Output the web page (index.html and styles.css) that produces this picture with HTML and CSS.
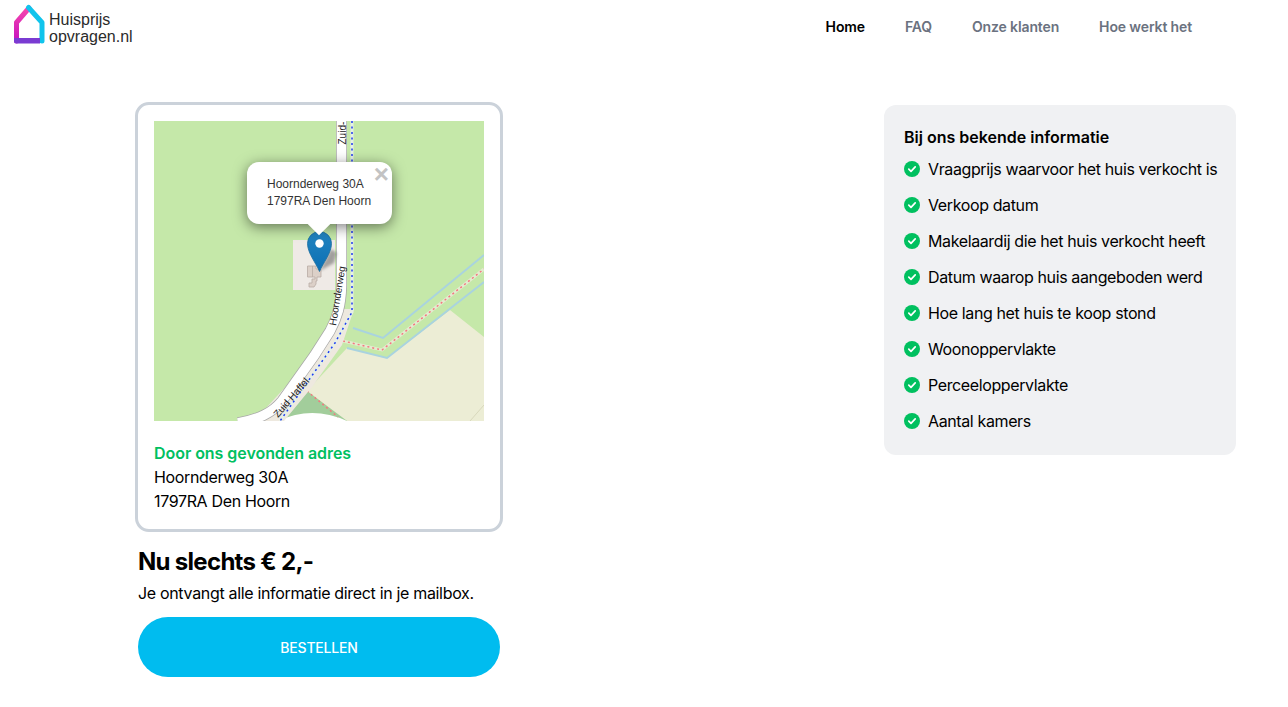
FILE: index.html
```html
<!DOCTYPE html>
<html lang="nl">
<head>
    <meta charset="UTF-8">
    <meta name="viewport" content="width=device-width, initial-scale=1.0">
    <title>Huisprijs opvragen</title>
    <link rel="stylesheet" href="styles.css">
</head>
<body>
    <header>
        <a class="logo" href="#">
            <svg width="34" height="42" viewBox="0 0 34 42">
                <defs>
                    <linearGradient id="logo-left" x1="0" y1="0" x2="0" y2="1">
                        <stop offset="0" stop-color="#f646ac"/>
                        <stop offset="1" stop-color="#c612c0"/>
                    </linearGradient>
                </defs>
                <path d="M3.500 37V18.500L16 4" fill="none" stroke="url(#logo-left)" stroke-width="5" stroke-linecap="round" stroke-linejoin="round"/>
                <path d="M15.500 3.500L29 18.500V37" fill="none" stroke="#10c4ec" stroke-width="5" stroke-linecap="round" stroke-linejoin="round"/>
                <path d="M1 34H27V39.500H3.500Q1 39.500 1 37Z" fill="#7a3bd2"/>
            </svg>
            <span>Huisprijs<br>opvragen.nl</span>
        </a>
        <nav>
            <a class="active" href="#">Home</a>
            <a href="#">FAQ</a>
            <a href="#">Onze klanten</a>
            <a href="#">Hoe werkt het</a>
        </nav>
    </header>
    <main>
        <section class="order">
            <div class="card">
                <div class="map">
                    <svg width="330" height="300" viewBox="0 0 330 300">
                        <rect width="330" height="300" fill="#c5e8a9"/>
                        <!-- akker -->
                        <path d="M296 189L330 216V300H193L153 270L193 227L233 237Z" fill="#ecedd5"/>
                        <path d="M316 300L330 284" fill="none" stroke="#d8d8bc" stroke-width="1"/>
                        <path d="M153 270L124 300H193Z" fill="#a2cd9b"/>
                        <path d="M124 300Q158 284 193 300Z" fill="#fff"/>
                        <!-- sloten -->
                        <path d="M193 227L233 237L330 161" fill="none" stroke="#a9d3df" stroke-width="2"/>
                        <path d="M199 207L229 217L330 134" fill="none" stroke="#a9d3df" stroke-width="2"/>
                        <path d="M189 220L228 229L330 148" fill="none" stroke="#e3eccf" stroke-width="3"/>
                        <path d="M189 220L228 229L330 148" fill="none" stroke="#f4777f" stroke-width="1.500" stroke-dasharray="2 3"/>
                        <path d="M153 270L184 296" fill="none" stroke="#f4777f" stroke-width="1.500" stroke-dasharray="2 3"/>
                        <!-- perceel -->
                        <rect x="139" y="119" width="42" height="50" fill="#efeae6"/>
                        <path d="M153.500 145H162V148H167V156H163V160H162V163L160 166H155V162H158V158H161V156H153.500Z" fill="#dcd0c8" stroke="#b9aca4" stroke-width=".8"/>
                        <path d="M158.500 145V156" fill="none" stroke="#b9aca4" stroke-width=".8"/>
                        <!-- weg -->
                        <path d="M200 188L188 224L158 266L130 300H100L160 235L176 210L183 188Z" fill="#eee9df"/>
                        <path d="M187.500 0V165C187 185 183 197 176 210L160 235L128 280C118 292 105 298 84 302" fill="none" stroke="#a8a8a8" stroke-width="11"/>
                        <path d="M187.500 0V165C187 185 183 197 176 210L160 235L128 280C118 292 105 298 84 302" fill="none" stroke="#fff" stroke-width="9.500"/>
                        <path d="M198 0V191L181 222L126 300" fill="none" stroke="#e6f0e6" stroke-width="3"/>
                        <path d="M198 0V191L181 222L126 300" fill="none" stroke="#1f3cf0" stroke-width="1.500" stroke-dasharray="2 3.500"/>
                        <text class="road-label" transform="translate(192 23.500) rotate(-90)">Zuid-</text>
                        <text class="road-label" transform="translate(182 205) rotate(-81)">Hoornderweg</text>
                        <text class="road-label" transform="translate(124 297) rotate(-49)">Zuid Haffel</text>
                    </svg>
                    <svg class="marker" width="50" height="41" viewBox="0 0 50 41">
                        <defs>
                            <linearGradient id="pin" x1="0" y1="0" x2="0" y2="1">
                                <stop offset="0" stop-color="#2384c0"/>
                                <stop offset="1" stop-color="#0a6fb4"/>
                            </linearGradient>
                            <filter id="pin-blur"><feGaussianBlur stdDeviation="1.500"/></filter>
                        </defs>
                        <path d="M12.500 40L24 18L30 22L27 32Z" fill="#555" opacity=".5" filter="url(#pin-blur)"/>
                        <path d="M12.500 40.500C9 32 .5 22 .5 12.500A12 12 0 0 1 24.500 12.500C24.500 22 16 32 12.500 40.500Z" fill="url(#pin)" stroke="#1d6f9f" stroke-width=".8"/>
                        <circle cx="12.500" cy="12.500" r="4.200" fill="#fff"/>
                    </svg>
                    <div class="popup">
                        <span class="popup-close">×</span>
                        Hoornderweg 30A<br>1797RA Den Hoorn
                    </div>
                </div>
                <div class="address">
                    <strong>Door ons gevonden adres</strong>
                    <p>Hoornderweg 30A</p>
                    <p>1797RA Den Hoorn</p>
                </div>
            </div>
            <div class="price">
                <h2>Nu slechts € 2,-</h2>
                <p>Je ontvangt alle informatie direct in je mailbox.</p>
                <button class="btn">Bestellen</button>
            </div>
        </section>
        <aside class="info">
            <h3>Bij ons bekende informatie</h3>
            <ul>
                <li><svg viewBox="0 0 16 16"><circle cx="8" cy="8" r="8"/><path d="M4.800 8.200L7 10.300L11.200 5.900"/></svg>Vraagprijs waarvoor het huis verkocht is</li>
                <li><svg viewBox="0 0 16 16"><circle cx="8" cy="8" r="8"/><path d="M4.800 8.200L7 10.300L11.200 5.900"/></svg>Verkoop datum</li>
                <li><svg viewBox="0 0 16 16"><circle cx="8" cy="8" r="8"/><path d="M4.800 8.200L7 10.300L11.200 5.900"/></svg>Makelaardij die het huis verkocht heeft</li>
                <li><svg viewBox="0 0 16 16"><circle cx="8" cy="8" r="8"/><path d="M4.800 8.200L7 10.300L11.200 5.900"/></svg>Datum waarop huis aangeboden werd</li>
                <li><svg viewBox="0 0 16 16"><circle cx="8" cy="8" r="8"/><path d="M4.800 8.200L7 10.300L11.200 5.900"/></svg>Hoe lang het huis te koop stond</li>
                <li><svg viewBox="0 0 16 16"><circle cx="8" cy="8" r="8"/><path d="M4.800 8.200L7 10.300L11.200 5.900"/></svg>Woonoppervlakte</li>
                <li><svg viewBox="0 0 16 16"><circle cx="8" cy="8" r="8"/><path d="M4.800 8.200L7 10.300L11.200 5.900"/></svg>Perceeloppervlakte</li>
                <li><svg viewBox="0 0 16 16"><circle cx="8" cy="8" r="8"/><path d="M4.800 8.200L7 10.300L11.200 5.900"/></svg>Aantal kamers</li>
            </ul>
        </aside>
    </main>
</body>
</html>
```
FILE: styles.css
```css
body {
    font-family: Inter, "Noto Sans", sans-serif;
    margin: 0;
    padding: 0;
    color: #000;
    background-color: #fff;
    font-size: 16px;
    line-height: 24px;
}
header {
    display: flex;
    align-items: flex-start;
    justify-content: space-between;
    height: 54px;
    padding: 0 96px 0 13px;
}
.logo {
    display: flex;
    gap: 2px;
    padding-top: 4px;
    text-decoration: none;
    color: #2b2b2b;
    font-family: "Liberation Sans", Arial, sans-serif;
    font-size: 16px;
    line-height: 17px;
}
.logo span {
    padding-top: 7px;
}
nav {
    display: flex;
    gap: 40px;
    padding-top: 17px;
}
nav a {
    text-decoration: none;
    color: #6b7280;
    font-size: 14px;
    line-height: 20px;
    font-weight: 600;
    letter-spacing: -0.13px;
}
nav a.active {
    color: #000;
}
main {
    display: flex;
    justify-content: space-between;
    align-items: flex-start;
    padding: 48px 52px 30px 135px;
}
.order {
    width: 368px;
}
.card {
    border: 3px solid #cbd2da;
    border-radius: 14px;
    padding: 16px;
}
.map {
    position: relative;
    width: 330px;
    height: 300px;
}
.map > svg:first-child {
    display: block;
}
.road-label {
    font-family: "Liberation Sans", Arial, sans-serif;
    font-size: 10px;
    fill: #222;
}
.marker {
    position: absolute;
    left: 153px;
    top: 110px;
}
.popup {
    position: absolute;
    left: 93px;
    top: 41px;
    width: 145px;
    height: 62px;
    box-sizing: border-box;
    padding: 14px 0 0 20px;
    background-color: #fff;
    border-radius: 12px;
    box-shadow: 0 3px 14px rgba(0, 0, 0, 0.5);
    font-family: "Liberation Sans", Arial, sans-serif;
    font-size: 12px;
    line-height: 17px;
    color: #333;
}
.popup::after {
    content: "";
    position: absolute;
    left: 64px;
    bottom: -8px;
    width: 16px;
    height: 16px;
    background-color: #fff;
    transform: rotate(45deg);
}
.popup-close {
    position: absolute;
    right: 3px;
    top: 0;
    font-size: 26px;
    line-height: 24px;
    font-weight: 700;
    color: #c3c3c3;
}
.address {
    margin-top: 20px;
}
.address strong {
    color: #00c05f;
    font-weight: 600;
    letter-spacing: -0.05px;
}
.address p {
    margin: 0;
    letter-spacing: -0.35px;
}
.price {
    padding: 14px 3px 0;
}
.price h2 {
    margin: 0;
    font-size: 24px;
    line-height: 32px;
    font-weight: 700;
    letter-spacing: -0.7px;
}
.price p {
    margin: 3px 0 12px;
    letter-spacing: -0.33px;
}
.btn {
    display: block;
    width: 362px;
    height: 60px;
    border: 0;
    border-radius: 30px;
    background-color: #00bcef;
    color: #fff;
    font-family: inherit;
    font-size: 14px;
    font-weight: 500;
    letter-spacing: -0.2px;
    text-transform: uppercase;
}
.info {
    width: 352px;
    height: 350px;
    box-sizing: border-box;
    margin-top: 3px;
    padding: 20px;
    background-color: #f0f1f3;
    border-radius: 12px;
}
.info h3 {
    margin: 0;
    font-size: 16px;
    line-height: 24px;
    font-weight: 600;
}
.info ul {
    list-style: none;
    margin: 8px 0 0;
    padding: 0;
    display: flex;
    flex-direction: column;
    gap: 12px;
}
.info li {
    display: flex;
    align-items: center;
    gap: 8px;
    white-space: nowrap;
    letter-spacing: -0.38px;
}
.info li svg {
    width: 16px;
    height: 16px;
    flex: none;
}
.info li circle {
    fill: #00c05f;
}
.info li path {
    fill: none;
    stroke: #fff;
    stroke-width: 1.700;
    stroke-linecap: round;
    stroke-linejoin: round;
}
```
